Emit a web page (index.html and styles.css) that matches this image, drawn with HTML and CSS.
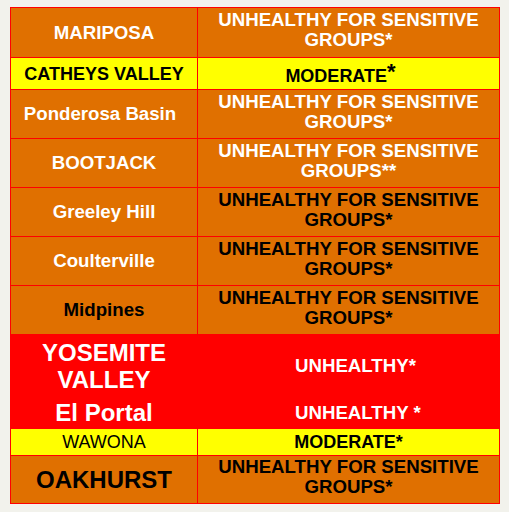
FILE: index.html
```html
<!DOCTYPE html>
<html>
<head>
<meta charset="utf-8">
<link rel="stylesheet" href="styles.css">
</head>
<body>
<table class="aqi">
  <colgroup><col class="c1"><col class="c2"></colgroup>
  <tr class="h50 orange">
    <td class="loc white">MARIPOSA</td>
    <td class="st white">UNHEALTHY FOR SENSITIVE GROUPS*</td>
  </tr>
  <tr class="h32 yellow">
    <td class="loc">CATHEYS VALLEY</td>
    <td class="st mod1">MODERATE<span class="big-ast">*</span></td>
  </tr>
  <tr class="h49 orange">
    <td class="loc white shift">Ponderosa Basin</td>
    <td class="st white">UNHEALTHY FOR SENSITIVE GROUPS*</td>
  </tr>
  <tr class="h49 orange">
    <td class="loc white">BOOTJACK</td>
    <td class="st white">UNHEALTHY FOR SENSITIVE GROUPS**</td>
  </tr>
  <tr class="h49 orange">
    <td class="loc white">Greeley Hill</td>
    <td class="st">UNHEALTHY FOR SENSITIVE GROUPS*</td>
  </tr>
  <tr class="h49 orange">
    <td class="loc white">Coulterville</td>
    <td class="st">UNHEALTHY FOR SENSITIVE GROUPS*</td>
  </tr>
  <tr class="h49 orange">
    <td class="loc">Midpines</td>
    <td class="st">UNHEALTHY FOR SENSITIVE GROUPS*</td>
  </tr>
  <tr class="h62 red">
    <td class="loc big white">YOSEMITE<br>VALLEY</td>
    <td class="st white left">UNHEALTHY*</td>
  </tr>
  <tr class="h32 red">
    <td class="loc big white">El Portal</td>
    <td class="st white left">UNHEALTHY *</td>
  </tr>
  <tr class="h27 yellow">
    <td class="loc regular">WAWONA</td>
    <td class="st">MODERATE*</td>
  </tr>
  <tr class="h48 orange">
    <td class="loc big">OAKHURST</td>
    <td class="st">UNHEALTHY FOR SENSITIVE GROUPS*</td>
  </tr>
</table>
</body>
</html>
```

FILE: styles.css
```css
html, body {
  margin: 0;
  padding: 0;
  background: #f2f2ec;
}
body {
  padding: 7px 0 0 10px;
  font-family: "Liberation Sans", Arial, sans-serif;
}
.aqi {
  border-collapse: collapse;
  table-layout: fixed;
  width: 489px;
  border: 1px solid #c8250a;
}
.c1 { width: 187px; }
.c2 { width: 302px; }
.aqi td {
  border: 1px solid #f00;
  padding: 0;
  text-align: center;
  vertical-align: middle;
  font-weight: bold;
  font-size: 14pt;
  line-height: 20px;
  color: #000;
}
.aqi td.st { padding: 0 10px 5px; }
.h50 { height: 50px; }
.h32 { height: 32px; }
.h49 { height: 49px; }
.h48 { height: 48px; }
.h62 { height: 62px; }
.h27 { height: 27px; }
.orange td { background: #e07000; }
.red td { background: #ff0000; }
.yellow td { background: #ffff00; }
.aqi .yellow td { font-size: 18px; padding-bottom: 0; }
.aqi td.white { color: #fff; }
.aqi td.big { font-size: 24px; line-height: 27px; }
.aqi td.regular { font-weight: normal; }
.aqi td.shift { padding-right: 8px; }
.aqi td.left { text-align: left; padding-left: 97px; padding-bottom: 0; }
.aqi td.mod1 { padding-right: 26px; }
.big-ast {
  font-size: 22px;
  vertical-align: 3px;
}
```
